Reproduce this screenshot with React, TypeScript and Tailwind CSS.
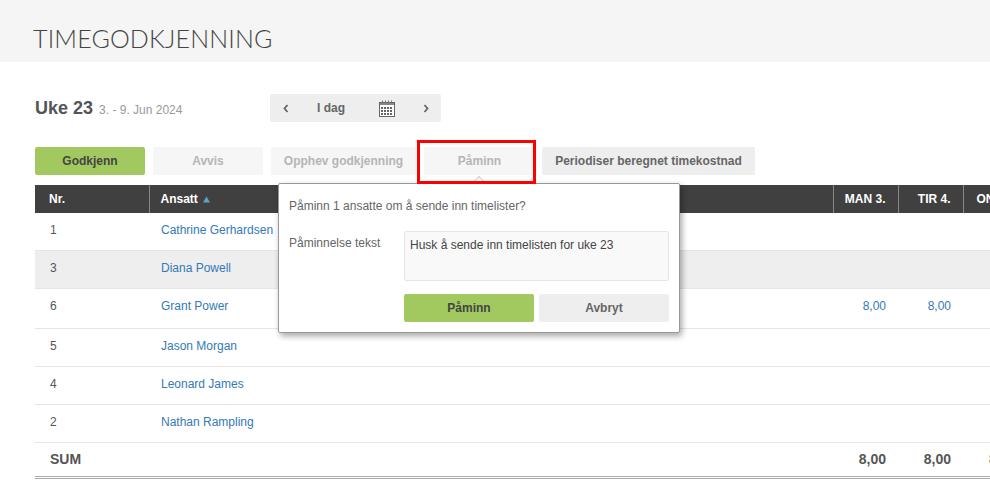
const rows = [
  { nr: '1', name: 'Cathrine Gerhardsen', h: 'h-[37px]', pad: 'pb-[2px]' },
  { nr: '3', name: 'Diana Powell', h: 'h-[38px]', pad: 'pb-[2px]', shaded: true },
  { nr: '6', name: 'Grant Power', h: 'h-[40px]', pad: 'pb-[4px]', man: '8,00', tir: '8,00' },
  { nr: '5', name: 'Jason Morgan', h: 'h-[38px]', pad: 'pb-[2px]' },
  { nr: '4', name: 'Leonard James', h: 'h-[38px]', pad: 'pb-[2px]' },
  { nr: '2', name: 'Nathan Rampling', h: 'h-[38px]', pad: 'pb-[2px]' },
]

const CalendarIcon = () => (
  <svg width="16" height="17" viewBox="0 0 16 17" fill="none" className="block">
    <rect x="0.5" y="2.5" width="15" height="14" fill="#fff" stroke="#666" />
    <rect x="1" y="3" width="14" height="2" fill="#888" />
    <path d="M3.5 0.5v3M6.5 0.5v3M9.5 0.5v3M12.5 0.5v3" stroke="#777" />
    <g fill="#666">
      {[7, 10, 13].map((y) =>
        [2, 5, 8, 11].map((x) => <rect key={`${x}-${y}`} x={x} y={y} width="2" height="2" />),
      )}
    </g>
  </svg>
)

const Chevron = ({ d }: { d: string }) => (
  <svg width="6" height="9" viewBox="0 0 6 9" fill="none" className="block">
    <path d={d} stroke="#666" strokeWidth="1.8" />
  </svg>
)

const Popover = () => (
  <div className="absolute left-[278px] top-[183px] z-10 h-[150px] w-[402px] rounded-[2px] border border-[#999] bg-white pl-[10px] pr-[10px] pt-[14px] shadow-[2px_3px_6px_rgba(0,0,0,0.35)]">
    <div className="absolute left-[195px] top-[-6px] h-[10px] w-[10px] rotate-45 border-l border-t border-[#ccc] bg-white" />
    <p className="text-[12px] leading-[16px] text-[#666]">Påminn 1 ansatte om å sende inn timelister?</p>
    <div className="mt-[17px] flex">
      <label className="w-[115px] pt-[4px] text-[12px] leading-[16px] text-[#666]">Påminnelse tekst</label>
      <div className="h-[50px] w-[265px] rounded-[2px] border border-[#e5e5e5] bg-[#f9f9f9] px-[5px] pt-[5px] text-[12px] leading-[16px] text-[#444]">
        Husk å sende inn timelisten for uke 23
      </div>
    </div>
    <div className="ml-[115px] mt-[13px] flex gap-[5px]">
      <button className="h-[28px] w-[130px] rounded-[2px] bg-[#a2c95f] text-[12px] font-bold text-[#444]">Påminn</button>
      <button className="h-[28px] w-[130px] rounded-[2px] bg-[#eeeeee] text-[12px] font-bold text-[#666]">Avbryt</button>
    </div>
  </div>
)

export default function App() {
  return (
    <div className="relative h-[493px] w-[990px] overflow-hidden bg-white font-['Liberation_Sans',Arial,sans-serif] text-[12px] text-[#555]">
      <header className="flex h-[62px] items-start bg-[#f5f5f5] pl-[33px] pt-[22px]">
        <h1 className="font-['Lato',sans-serif] text-[25px] font-light leading-[32px] tracking-[0.15px] text-[#444]">TIMEGODKJENNING</h1>
      </header>

      <div className="w-[1100px] pl-[35px]">
        <div className="mt-[32px] flex h-[28px] items-center">
          <div className="flex w-[235px] items-baseline gap-[6px]">
            <span className="text-[18px] font-bold text-[#555]">Uke 23</span>
            <span className="text-[12px] text-[#999]">3. - 9. Jun 2024</span>
          </div>
          <div className="flex h-[28px] w-[171px] items-center rounded-[2px] bg-[#eeeeee] font-bold text-[#666]">
            <span className="ml-[13px] w-[20px]"><Chevron d="M4.5 1 1.5 4.5 4.5 8" /></span>
            <span className="ml-[14px] w-[60px] text-[12px]">I dag</span>
            <span className="ml-[2px]"><CalendarIcon /></span>
            <span className="ml-[28px]"><Chevron d="M1.5 1 4.5 4.5 1.5 8" /></span>
          </div>
        </div>

        <div className="mt-[25px] flex h-[28px] text-[12px] font-bold">
          <button className="h-[28px] w-[110px] rounded-[2px] bg-[#a2c95f] text-[#444]">Godkjenn</button>
          <button className="ml-[8px] h-[28px] w-[110px] rounded-[2px] bg-[#f6f6f6] text-[#b5b5b5]">Avvis</button>
          <button className="ml-[8px] h-[28px] w-[145px] rounded-[2px] bg-[#f6f6f6] text-[#b5b5b5]">Opphev godkjenning</button>
          <button className="ml-[8px] h-[28px] w-[111px] rounded-[2px] bg-[#f6f6f6] text-[#b5b5b5]">Påminn</button>
          <button className="ml-[7px] h-[28px] w-[213px] rounded-[2px] bg-[#eeeeee] text-[#666]">Periodiser beregnet timekostnad</button>
        </div>

        <table className="mt-[10px] w-[1060px] table-fixed border-collapse">
          <colgroup>
            <col className="w-[114px]" />
            <col className="w-[684px]" />
            <col className="w-[65px]" />
            <col className="w-[65px]" />
            <col className="w-[65px]" />
            <col />
          </colgroup>
          <thead>
            <tr className="h-[28px] bg-[#404040] text-[12px] font-bold text-white">
              <th className="pl-[14px] text-left font-bold">Nr.</th>
              <th className="border-l border-[#888] pl-[11px] text-left font-bold">
                <span className="inline-flex items-center gap-[5px]">
                  Ansatt
                  <svg width="7" height="7" viewBox="0 0 7 7" className="block">
                    <path d="M3.5 0.5 7 6.5H0z" fill="#5ba3c7" />
                  </svg>
                </span>
              </th>
              <th className="border-l border-[#888] pr-[12px] text-right font-bold">MAN 3.</th>
              <th className="border-l border-[#888] pr-[12px] text-right font-bold">TIR 4.</th>
              <th className="border-l border-[#888] pl-[13px] text-left font-bold">ONS 5.</th>
              <th />
            </tr>
          </thead>
          <tbody>
            {rows.map((r) => (
              <tr key={r.nr} className={`${r.h} border-b border-[#e5e5e5] ${r.shaded ? 'bg-[#eeeeee]' : ''}`}>
                <td className={`${r.pad} pl-[15px]`}>{r.nr}</td>
                <td className={`${r.pad} pl-[12px] text-[#337ab7]`}>{r.name}</td>
                <td className={`${r.pad} pr-[12px] text-right text-[#337ab7]`}>{r.man}</td>
                <td className={`${r.pad} pr-[12px] text-right text-[#337ab7]`}>{r.tir}</td>
                <td />
                <td />
              </tr>
            ))}
          </tbody>
          <tfoot>
            <tr className="h-[35px] border-b-[3px] border-double border-[#aaa] text-[14px] font-bold">
              <td className="pl-[15px]">SUM</td>
              <td />
              <td className="pr-[12px] text-right">8,00</td>
              <td className="pr-[12px] text-right">8,00</td>
              <td className="pl-[26px]">8,00</td>
              <td />
            </tr>
          </tfoot>
        </table>
      </div>

      <div className="absolute left-[417px] top-[140px] z-20 h-[44px] w-[119px] border-[3px] border-[#f00]" />
      <Popover />
    </div>
  )
}
